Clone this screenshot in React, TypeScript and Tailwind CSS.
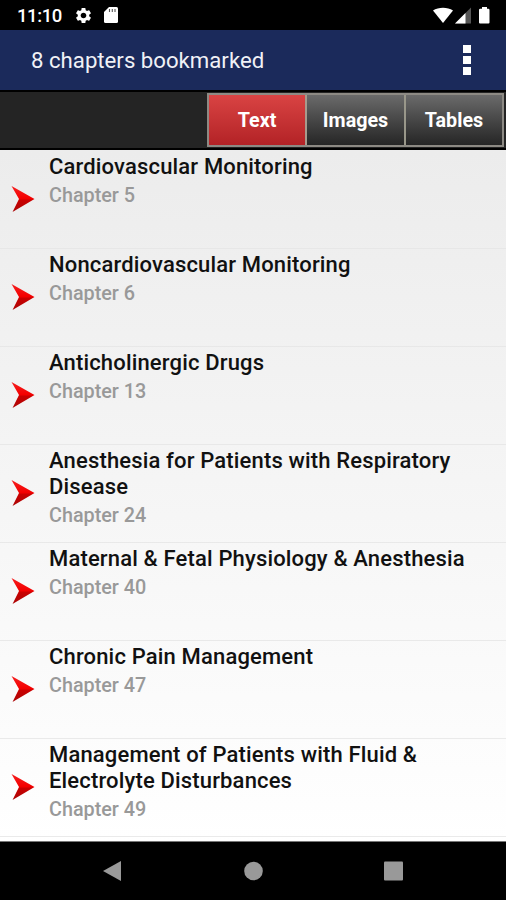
import { MdSettings } from "react-icons/md";

const chapters = [
  { title: "Cardiovascular Monitoring", chapter: "Chapter 5" },
  { title: "Noncardiovascular Monitoring", chapter: "Chapter 6" },
  { title: "Anticholinergic Drugs", chapter: "Chapter 13" },
  { title: "Anesthesia for Patients with Respiratory Disease", chapter: "Chapter 24" },
  { title: "Maternal & Fetal Physiology & Anesthesia", chapter: "Chapter 40" },
  { title: "Chronic Pain Management", chapter: "Chapter 47" },
  { title: "Management of Patients with Fluid & Electrolyte Disturbances", chapter: "Chapter 49" },
];

const StatusBar = () => {
  return (
    <div className="flex h-[30px] items-center bg-black pl-[17px] pr-[16px] text-white">
      <span className="w-[45px] whitespace-nowrap pt-[2px] text-[18.5px] font-medium leading-none tracking-[-0.4px]">11:10</span>
      <MdSettings className="ml-[12px] h-[19px] w-[19px]" />
      <svg className="ml-[11px] h-[16px] w-[14px]" viewBox="0 0 14 16">
        <path d="M5 0h7.500Q14 0 14 1.500v13Q14 16 12.500 16h-11Q0 16 0 14.500V5z" fill="#fff" />
        <path d="M5.500 2v3M8.300 2v3M11 2v3" stroke="#555" strokeWidth="1.100" />
      </svg>
      <svg className="ml-auto h-[17px] w-[57px]" viewBox="0 0 57 17">
        <path d="M0 3.500C5.500-.2 14.500-.2 20 3.500L10 16z" fill="#fff" />
        <path d="M22 16.500L38 .5v16z" fill="#555" />
        <path d="M22 16.500L32.500 6v10.500z" fill="#fff" />
        <path d="M46 3Q46 1.800 47.200 1.800H49V0h5v1.800h1.300Q56.500 1.800 56.500 3v12.500q0 1-1 1H47q-1 0-1-1z" fill="#fff" />
      </svg>
    </div>
  );
};

const Arrow = () => {
  return (
    <svg className="mt-[34px] h-[28px] w-[24px] shrink-0" viewBox="0 0 24 28">
      <defs>
        <linearGradient id="arrow" x1="0" y1="0" x2="0" y2="1">
          <stop offset="0" stopColor="#f52020" />
          <stop offset=".48" stopColor="#f40000" />
          <stop offset=".56" stopColor="#c90000" />
          <stop offset="1" stopColor="#aa0808" />
        </linearGradient>
      </defs>
      <path d="M.500 1L23.500 14L1.500 27L8 14z" fill="url(#arrow)" />
    </svg>
  );
};

const App = () => {
  return (
    <div className="flex h-[900px] w-[506px] flex-col overflow-hidden bg-black font-['Roboto',sans-serif]">
      <StatusBar />
      <div className="flex h-[60px] items-center justify-between bg-[#1b2a5b] pl-[31px] pr-[35px]">
        <h1 className="whitespace-nowrap pt-[2px] text-[22.2px] text-[#f0f1f6]">8 chapters bookmarked</h1>
        <div className="flex flex-col gap-[3px] pb-[1px]">
          <div className="h-[8px] w-[8px] bg-white"></div>
          <div className="h-[8px] w-[8px] bg-white"></div>
          <div className="h-[8px] w-[8px] bg-white"></div>
        </div>
      </div>
      <div className="flex h-[60px] justify-end border-y-2 border-black bg-[#242424] pr-[2px] pt-[1px]">
        <div className="flex h-[54px] w-[297px] border-2 border-[#8d8a84] text-[19.7px] font-bold text-white [text-shadow:1px_1px_2px_#000]">
          <button className="w-[98px] border-r-2 border-[#a69a8d] bg-linear-to-b from-[#d94343] to-[#b32226] pt-[2px]">Text</button>
          <button className="w-[99px] border-r-2 border-[#99978a] bg-linear-to-b from-[#6b6b6b] to-[#262626] pt-[2px]">Images</button>
          <button className="flex-1 bg-linear-to-b from-[#6b6b6b] to-[#262626] pt-[2px]">Tables</button>
        </div>
      </div>
      <div className="h-[691px] shrink-0 bg-linear-to-b from-[#ececec] to-white pt-[1px]">
        {chapters.map((item) => (
          <div key={item.chapter} className="flex h-[98px] border-b border-[#e5e5e5]/80 pl-[11px]">
            <Arrow />
            <div className="ml-[14px] w-[430px] pt-[3px]">
              <p className="text-[22px] font-medium leading-[26px] tracking-[0.16px] text-[#111]">{item.title}</p>
              <p className="mt-[3px] text-[19.8px] font-medium leading-[26px] text-[#999]">{item.chapter}</p>
            </div>
          </div>
        ))}
      </div>
      <div className="flex flex-1 items-center border-t border-[#777] pl-[102px]">
        <svg className="h-[22px] w-[302px]" viewBox="0 0 302 22">
          <path d="M1 11L19 1v20z" fill="#999" />
          <circle cx="151.500" cy="11" r="9.300" fill="#999" />
          <rect x="282" y="1.500" width="19" height="19" rx="1" fill="#999" />
        </svg>
      </div>
    </div>
  );
};

export default App;
